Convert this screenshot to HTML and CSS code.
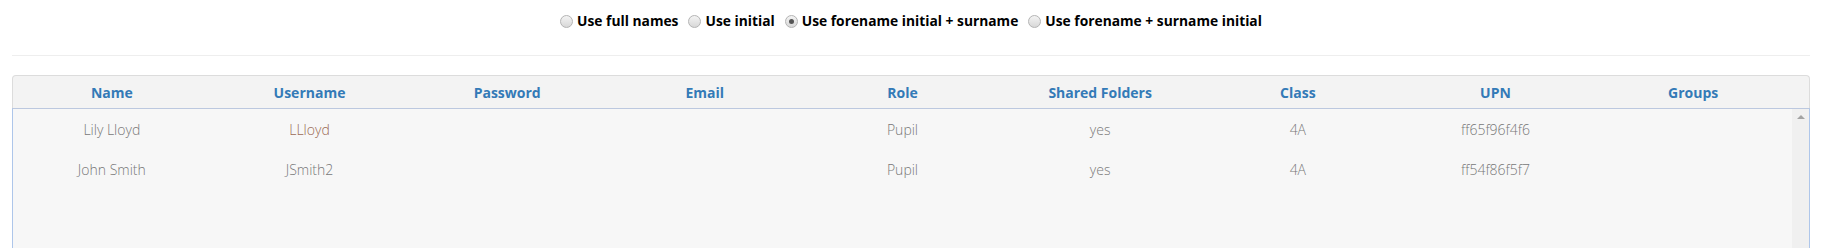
FILE: index.html
```html
<!DOCTYPE html>
<html lang="en">
<head>
    <meta charset="UTF-8">
    <title>Import Users</title>
    <link rel="stylesheet" href="styles.css">
</head>
<body>

<div class="page">
    <!-- Username format options -->
    <div class="name-options">
        <label><input type="radio" name="format" value="full"> Use full names</label>
        <label><input type="radio" name="format" value="initial"> Use initial</label>
        <label><input type="radio" name="format" value="fi-surname" checked> Use forename initial + surname</label>
        <label><input type="radio" name="format" value="forename-si"> Use forename + surname initial</label>
    </div>

    <hr class="divider">

    <!-- User grid -->
    <div class="user-grid">
        <div class="grid-header">
            <div class="cell">Name</div>
            <div class="cell">Username</div>
            <div class="cell">Password</div>
            <div class="cell">Email</div>
            <div class="cell">Role</div>
            <div class="cell">Shared Folders</div>
            <div class="cell">Class</div>
            <div class="cell">UPN</div>
            <div class="cell">Groups</div>
        </div>
        <div class="grid-body">
            <div class="rows">
                <div class="row">
                    <div class="cell">Lily Lloyd</div>
                    <div class="cell changed">LLloyd</div>
                    <div class="cell"></div>
                    <div class="cell"></div>
                    <div class="cell">Pupil</div>
                    <div class="cell">yes</div>
                    <div class="cell">4A</div>
                    <div class="cell">ff65f96f4f6</div>
                    <div class="cell"></div>
                </div>
                <div class="row">
                    <div class="cell">John Smith</div>
                    <div class="cell">JSmith2</div>
                    <div class="cell"></div>
                    <div class="cell"></div>
                    <div class="cell">Pupil</div>
                    <div class="cell">yes</div>
                    <div class="cell">4A</div>
                    <div class="cell">ff54f86f5f7</div>
                    <div class="cell"></div>
                </div>
            </div>
            <div class="scrollbar"><span class="arrow-up"></span></div>
        </div>
    </div>
</div>

</body>
</html>
```

FILE: styles.css
```css
body {
    margin: 0;
    font-family: "Open Sans", "Liberation Sans", sans-serif;
    background-color: #fff;
    overflow: hidden;
}

.page {
    padding: 0 14px 0 12px;
}

/* Username options */
.name-options {
    display: flex;
    justify-content: center;
    gap: 10px;
    padding-top: 11px;
    line-height: 20px;
    font-size: 13.8px;
    font-weight: bold;
    color: #000;
}

.name-options label {
    display: flex;
    align-items: center;
    gap: 4px;
}

.name-options input {
    appearance: none;
    -webkit-appearance: none;
    margin: 0;
    width: 13px;
    height: 13px;
    border-radius: 50%;
    border: 1px solid #b4b4b4;
    background: linear-gradient(#f4f4f4, #d8d8d8);
    position: relative;
}

.name-options input:checked::after {
    content: "";
    position: absolute;
    left: 3px;
    top: 3px;
    width: 5px;
    height: 5px;
    border-radius: 50%;
    background-color: #555;
}

.divider {
    border: none;
    border-top: 1px solid #eee;
    margin: 24px 0 19px;
}

/* Grid */
.grid-header,
.row {
    display: grid;
    grid-template-columns: repeat(9, 1fr);
}

.grid-header {
    background-color: #f3f3f3;
    border: 1px solid #dcdcdc;
    border-bottom: none;
    border-radius: 4px 4px 0 0;
    padding-right: 17px;
    height: 32px;
    align-items: center;
    font-size: 14px;
    font-weight: bold;
    color: #337ab7;
}

.cell {
    text-align: center;
}

.grid-body {
    display: flex;
    height: 200px;
    background-color: #f7f7f7;
    border: 1px solid #aec6ea;
    border-top: 1px solid #bcc8df;
}

.rows {
    flex: 1;
}

.row {
    height: 40px;
    align-items: center;
    font-size: 14px;
    font-weight: 300;
    color: #777;
}

.row .changed {
    color: #9a6a55;
}

.scrollbar {
    width: 17px;
    background-color: #f0f0f0;
    display: flex;
    justify-content: center;
    padding-top: 6px;
}

.arrow-up {
    width: 0;
    height: 0;
    border-left: 4px solid transparent;
    border-right: 4px solid transparent;
    border-bottom: 4px solid #a3a3a3;
}
```
